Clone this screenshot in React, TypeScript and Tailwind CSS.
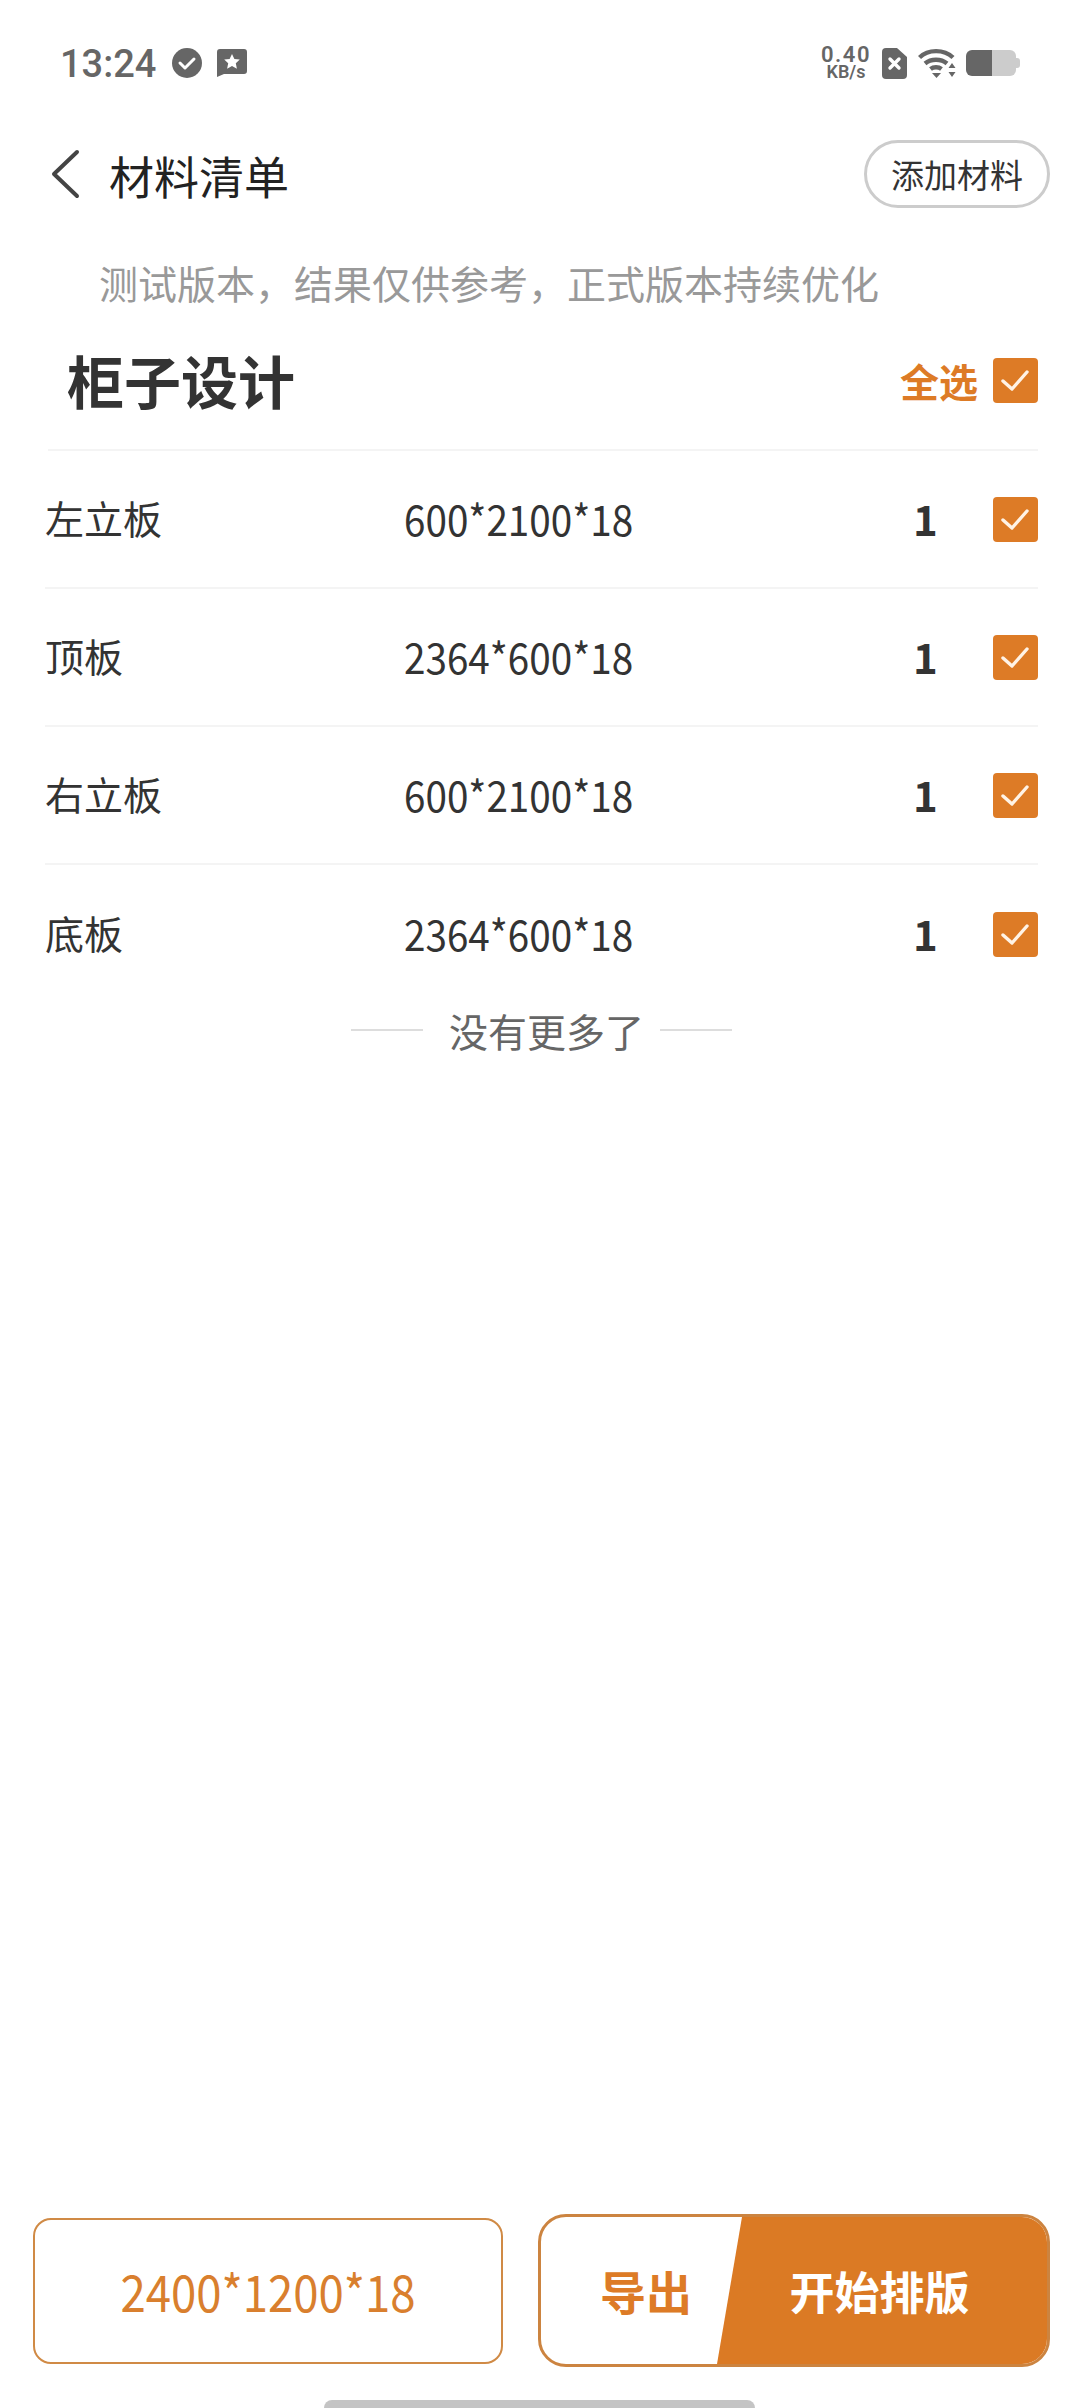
import React from "react";

const font = { fontFamily: '"Noto Sans CJK SC", "Noto Sans", sans-serif' };
const statusFont = { fontFamily: 'Roboto, "Noto Sans", sans-serif' };

const rows = [
  { name: "左立板", size: "600*2100*18", count: 1 },
  { name: "顶板", size: "2364*600*18", count: 1 },
  { name: "右立板", size: "600*2100*18", count: 1 },
  { name: "底板", size: "2364*600*18", count: 1 },
];

const Check = () => (
  <div className="flex h-[45px] w-[45px] shrink-0 items-center justify-center rounded-[4px] bg-[#dd7b26]">
    <svg width="31" height="25" viewBox="0 0 31 25" fill="none">
      <path d="M3 13l9 8L27 4" stroke="#fff3e6" strokeWidth="3.4" strokeLinecap="round" strokeLinejoin="round" />
    </svg>
  </div>
);

const StatusBar = () => (
  <div style={statusFont} className="flex h-[64px] items-center justify-between pl-[60px] pr-[60px] text-[#666]">
    <div className="flex items-center">
      <span className="mt-[2px] w-[94px] text-[38px] leading-none font-medium">13:24</span>
      <svg className="ml-[18px]" width="30" height="30" viewBox="0 0 30 30">
        <circle cx="15" cy="15" r="15" fill="#666" />
        <path d="M8 15l5 5 9-9" fill="none" stroke="#fff" strokeWidth="3" strokeLinecap="round" strokeLinejoin="round" />
      </svg>
      <svg className="ml-[15px]" width="30" height="28" viewBox="0 0 30 28">
        <path d="M3 0h24a3 3 0 0 1 3 3v19a3 3 0 0 1-3 3H7l-7 3V3a3 3 0 0 1 3-3z" fill="#666" />
        <path d="M15 5l2.4 5 5.4.6-4 3.700 1.100 5.400-4.900-2.800-4.900 2.800 1.100-5.400-4-3.700 5.400-.6z" fill="#fff" />
      </svg>
    </div>
    <div className="flex items-center">
      <div className="flex w-[50px] flex-col items-center font-semibold">
        <span className="text-[22px] leading-[17px] tracking-[1.5px]">0.40</span>
        <span className="text-[18px] leading-[17px]">KB/s</span>
      </div>
      <svg className="ml-[11px]" width="25" height="31" viewBox="0 0 25 31">
        <path d="M4 0h11l10 9v18a4 4 0 0 1-4 4H4a4 4 0 0 1-4-4V4a4 4 0 0 1 4-4z" fill="#666" />
        <path d="M8 11l9 9M17 11l-9 9" stroke="#fff" strokeWidth="3.4" strokeLinecap="round" />
      </svg>
      <svg className="ml-[11px]" width="38" height="30" viewBox="0 0 38 30" fill="none">
        <path d="M1.500 9.500C10 1 26 1 35 9.500" stroke="#666" strokeWidth="4.400" />
        <path d="M7 15.500c6-5 16-5 22 0" stroke="#666" strokeWidth="4.400" />
        <path d="M12.500 21c3-2.400 8-2.400 11 0" stroke="#666" strokeWidth="4.400" />
        <path d="M14 25h9l-4.500 5z" fill="#666" />
        <path d="M34 15l3.500 5h-7zM34 29l-3.500-5h7z" fill="#666" />
      </svg>
      <div className="ml-[10px] flex h-[26px] items-center">
        <div className="h-[26px] w-[26px] rounded-l-[6px] bg-[#666]" />
        <div className="h-[26px] w-[24px] rounded-r-[6px] bg-[#ccc]" />
        <div className="h-[10px] w-[4px] rounded-r-[3px] bg-[#ccc]" />
      </div>
    </div>
  </div>
);

export default function App() {
  return (
    <div style={font} className="flex h-[2408px] w-[1080px] flex-col overflow-hidden bg-white pt-[31px]">
      <StatusBar />

      <div className="mt-[45px] flex h-[68px] items-center justify-between pl-[50px] pr-[30px]">
        <div className="flex items-center">
          <svg width="30" height="50" viewBox="0 0 30 50" fill="none">
            <path d="M27 3L4 25l23 22" stroke="#444" strokeWidth="4" strokeLinecap="round" strokeLinejoin="round" />
          </svg>
          <span className="mt-[2px] ml-[29px] text-[45px] leading-none text-[#222]">材料清单</span>
        </div>
        <div className="flex h-[68px] w-[186px] items-center justify-center rounded-full border-[3px] border-[#ccc] pt-[2px] text-[33px] text-[#333]">
          添加材料
        </div>
      </div>

      <div className="mt-[49px] pl-[99px] text-[39px] leading-[50px] text-[#999]">
        测试版本，结果仅供参考，正式版本持续优化
      </div>

      <div className="mt-[42px] flex items-center justify-between pl-[67px] pr-[42px]">
        <span className="pb-[3px] text-[57px] leading-[60px] font-bold text-[#333]">柜子设计</span>
        <div className="flex items-center">
          <span className="text-[39px] leading-none font-bold text-[#dd7b26]">全选</span>
          <div className="ml-[15px]">
            <Check />
          </div>
        </div>
      </div>

      <div className="mx-[48px] mt-[37px] h-[2px] w-[990px] bg-[#f4f4f4]" />

      {rows.map((row, i) => (
        <div
          key={i}
          className={`ml-[45px] flex h-[138px] w-[993px] items-center ${i < 3 ? "border-b-2 border-[#f4f4f4]" : ""}`}
        >
          <span className="w-[359px] pb-[3px] text-[39px] text-[#333]">{row.name}</span>
          <span className="w-[509px] pb-[3px]">
            <span className="inline-block origin-left scale-x-[0.92] text-[42px] text-[#333]">{row.size}</span>
          </span>
          <span className="w-[80px] pb-[3px] text-[42px] font-bold text-[#333]">{row.count}</span>
          <Check />
        </div>
      ))}

      <div className="mt-[2px] flex items-center justify-center pl-[3px] text-[39px] leading-[50px] text-[#666]">
        <div className="h-[2px] w-[72px] bg-[#ddd]" />
        <span className="ml-[26px] mr-[16px]">没有更多了</span>
        <div className="h-[2px] w-[72px] bg-[#ddd]" />
      </div>

      <div className="mt-auto flex items-center justify-between pl-[33px] pr-[30px]">
        <div className="flex h-[146px] w-[470px] items-center justify-center rounded-[18px] border-2 border-[#d08a45] text-[50px] text-[#d97f2e]">
          <span className="inline-block scale-x-[0.91]">2400*1200*18</span>
        </div>
        <div className="relative flex h-[153px] w-[512px] overflow-hidden rounded-[28px] border-[3px] border-[#cc8440] bg-white">
          <div className="flex w-[200px] items-center justify-center pl-[10px] text-[46px] font-bold text-[#dd7b26]">导出</div>
          <div className="absolute inset-y-0 right-0 flex w-[330px] items-center justify-center bg-[#db7a24] pr-[5px] text-[45px] font-bold text-white [clip-path:polygon(25px_0,100%_0,100%_100%,0_100%)]">
            开始排版
          </div>
        </div>
      </div>

      <div className="mt-[33px] ml-[324px] h-[8px] w-[431px] rounded-t-full bg-[#c4c4c4]" />
    </div>
  );
}
